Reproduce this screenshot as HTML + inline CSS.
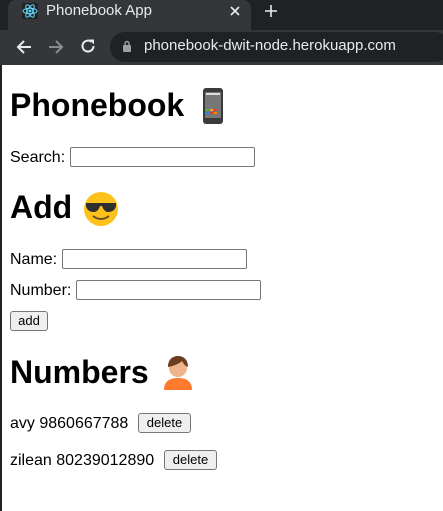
<!DOCTYPE html>
<html><head><style>
body{margin:0;width:443px;height:511px;overflow:hidden;background:#fff;font-family:"Liberation Sans",sans-serif;position:relative}
.a{position:absolute}
.h{font-weight:bold;font-size:32px;color:#000;white-space:nowrap}
.t{font-size:16px;color:#000;white-space:nowrap}
.in{position:absolute;height:18px;border:1px solid #767676;border-radius:2px;background:#fff}
.btn{position:absolute;height:18px;border:1px solid #767676;border-radius:3px;background:#efefef;font-size:13px;line-height:18px;text-align:center;color:#000}
</style></head><body>
<div class="a" style="left:0;top:0;width:443px;height:30px;background:#202124"></div>
<div class="a" style="left:8px;top:0;width:243px;height:30px;background:#35363a;border-radius:8px 8px 0 0"></div>
<svg class="a" style="left:22px;top:3px" width="16" height="16" viewBox="0 0 16 16"><rect width="16" height="16" rx="2" fill="#222"/><g fill="none" stroke="#61dafb" stroke-width="1"><ellipse cx="8" cy="8" rx="7" ry="2.7"/><ellipse cx="8" cy="8" rx="7" ry="2.7" transform="rotate(60 8 8)"/><ellipse cx="8" cy="8" rx="7" ry="2.7" transform="rotate(120 8 8)"/></g><circle cx="8" cy="8" r="1.4" fill="#61dafb"/></svg>
<div class="a" style="left:46px;top:2px;font-size:15px;color:#e8eaed">Phonebook App</div>
<svg class="a" style="left:230px;top:6px" width="10" height="10" viewBox="0 0 10 10"><path d="M1 1L9 9M9 1L1 9" stroke="#e8eaed" stroke-width="1.6"/></svg>
<svg class="a" style="left:264px;top:4px" width="14" height="14" viewBox="0 0 14 14"><path d="M7 1V13M1 7H13" stroke="#e8eaed" stroke-width="1.6"/></svg>
<div class="a" style="left:0;top:30px;width:443px;height:35px;background:#35363a"></div>
<svg class="a" style="left:16px;top:39px" width="16" height="16" viewBox="0 0 16 16"><path d="M15 8H2M8 2L2 8L8 14" stroke="#e8eaed" stroke-width="2" fill="none"/></svg>
<svg class="a" style="left:48px;top:39px" width="16" height="16" viewBox="0 0 16 16"><path d="M1 8H14M8 2L14 8L8 14" stroke="#8a8b8e" stroke-width="2" fill="none"/></svg>
<svg class="a" style="left:80px;top:38px" width="16" height="16" viewBox="0 0 16 16"><path d="M13.5 8A5.5 5.5 0 1 1 11.5 3.8" stroke="#e8eaed" stroke-width="2" fill="none"/><path d="M9 1.5H14V6.5z" fill="#e8eaed"/></svg>
<div class="a" style="left:110px;top:32px;width:340px;height:30px;background:#202124;border-radius:15px"></div>
<svg class="a" style="left:122px;top:40px" width="10" height="12" viewBox="0 0 10 12"><rect x="1" y="5" width="8" height="7" rx="1" fill="#9aa0a6"/><path d="M3 5V3.5a2 2 0 0 1 4 0V5" stroke="#9aa0a6" stroke-width="1.4" fill="none"/></svg>
<div class="a" style="left:144px;top:37px;font-size:15px;color:#e8eaed">phonebook-dwit-node.herokuapp.com</div>
<div class="a" style="left:0;top:65px;width:2px;height:446px;background:#202124"></div>

<div class="a h" style="left:10px;top:87px">Phonebook</div>
<svg class="a" style="left:202px;top:88px" width="22" height="36" viewBox="0 0 22 36"><rect x="1" y="0" width="20" height="36" rx="3" fill="#3a3a3a"/><rect x="3" y="4" width="16" height="26" fill="#777"/><rect x="4" y="5" width="14" height="2" fill="#ddd"/><g><rect x="4" y="21" width="3" height="2" fill="#4caf50"/><rect x="8" y="21" width="3" height="2" fill="#f9a825"/><rect x="12" y="21" width="3" height="2" fill="#e53935"/><rect x="4" y="24" width="3" height="2" fill="#1e88e5"/><rect x="8" y="24" width="3" height="2" fill="#e53935"/><rect x="12" y="24" width="3" height="2" fill="#fb8c00"/></g></svg>
<div class="a t" style="left:10px;top:149px">Search:</div>
<div class="in" style="left:70px;top:147px;width:183px"></div>

<div class="a h" style="left:10px;top:189px">Add</div>
<svg class="a" style="left:83px;top:191px" width="36" height="36" viewBox="0 0 36 36"><circle cx="18" cy="18" r="17" fill="#fcc21b"/><path d="M3 12h30v3c-1 5-5 6-8 6s-5-3-6-6h-2c-1 3-3 6-6 6s-7-1-8-6z" fill="#2f2f2f"/><path d="M10 25q8 6 16 0" stroke="#6b4a2b" stroke-width="2" fill="none"/></svg>
<div class="a t" style="left:10px;top:251px">Name:</div>
<div class="in" style="left:62px;top:249px;width:183px"></div>
<div class="a t" style="left:10px;top:282px">Number:</div>
<div class="in" style="left:76px;top:280px;width:183px"></div>
<div class="btn" style="left:10px;top:311px;width:36px">add</div>

<div class="a h" style="left:10px;top:354px">Numbers</div>
<svg class="a" style="left:160px;top:354px" width="36" height="36" viewBox="0 0 36 36"><path d="M4 36c0-9 6-12 14-12s14 3 14 12z" fill="#ff7a2f"/><circle cx="18" cy="14" r="9" fill="#f0b48a"/><path d="M8 13c0-8 5-11 10-11s10 3 10 11c-3-1-5-4-6-6-3 3-9 5-14 6z" fill="#6b3e1f"/></svg>
<div class="a t" style="left:10px;top:415px">avy 9860667788</div>
<div class="btn" style="left:138px;top:413px;width:51px">delete</div>
<div class="a t" style="left:10px;top:452px">zilean 80239012890</div>
<div class="btn" style="left:164px;top:450px;width:51px">delete</div>
</body></html>
